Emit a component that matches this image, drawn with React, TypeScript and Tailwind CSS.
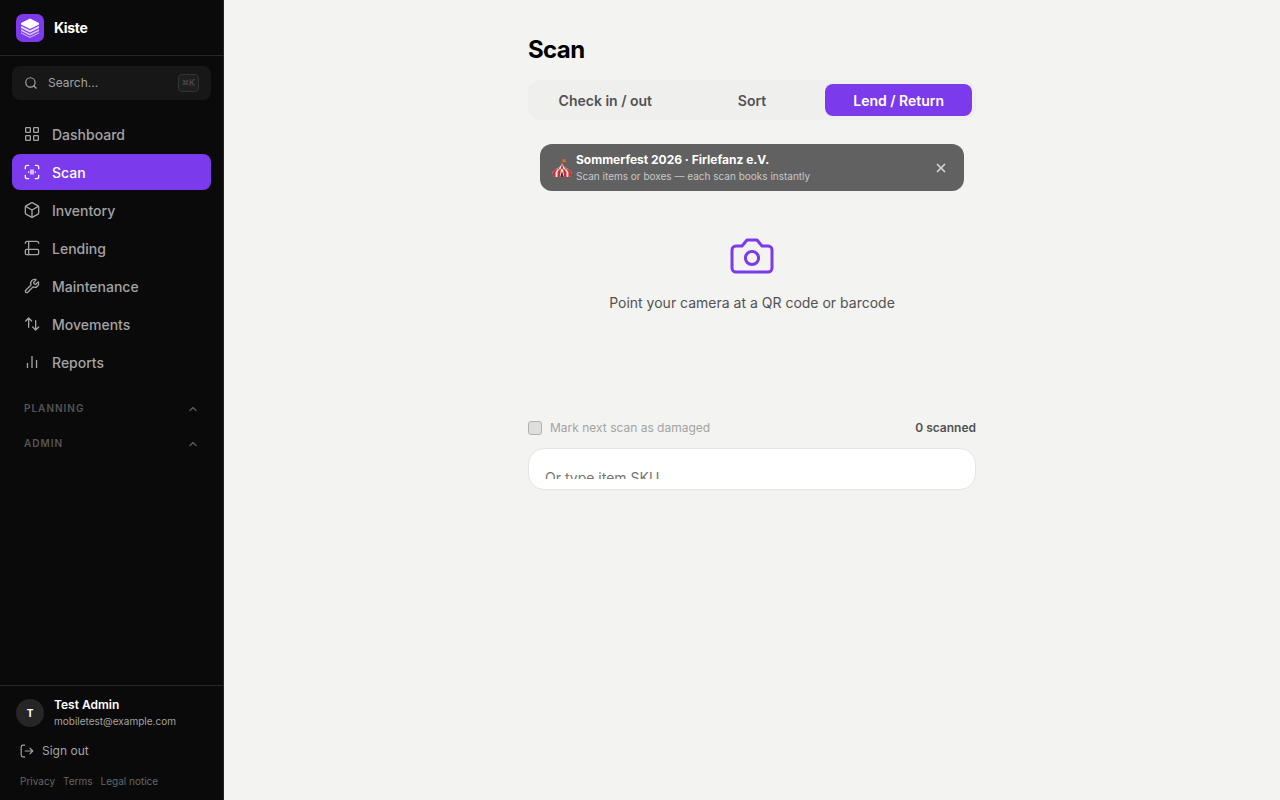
import React, { useState } from 'react';
import { ChevronUp, Search, Wrench, X } from 'lucide-react';

interface IconProps {
    className?: string;
    strokeWidth?: number;
}

const Svg: React.FC<IconProps & { children: React.ReactNode }> = ({ className, strokeWidth = 2, children }) => (
    <svg
        viewBox="0 0 24 24"
        fill="none"
        stroke="currentColor"
        strokeWidth={strokeWidth}
        strokeLinecap="round"
        strokeLinejoin="round"
        className={className}
        aria-hidden="true"
    >
        {children}
    </svg>
);

const DashboardIcon: React.FC<IconProps> = (props) => (
    <Svg {...props}>
        <rect x="2.5" y="2.5" width="7" height="7" rx="1" />
        <rect x="14.5" y="2.5" width="7" height="7" rx="1" />
        <rect x="2.5" y="14.5" width="7" height="7" rx="1" />
        <rect x="14.5" y="14.5" width="7" height="7" rx="1" />
    </Svg>
);

const ScanIcon: React.FC<IconProps> = (props) => (
    <Svg {...props}>
        <path d="M2 7V5a3 3 0 0 1 3-3h2M17 2h2a3 3 0 0 1 3 3v2M22 17v2a3 3 0 0 1-3 3h-2M7 22H5a3 3 0 0 1-3-3v-2" />
        <path d="M7 12v.5M10.500 9v6M13.500 9v6M17 12v.5" />
    </Svg>
);

const InventoryIcon: React.FC<IconProps> = (props) => (
    <Svg {...props}>
        <path d="M22 16.500v-9a2 2 0 0 0-1-1.700l-8-4.500a2 2 0 0 0-2 0L3 5.800a2 2 0 0 0-1 1.700v9a2 2 0 0 0 1 1.700l8 4.500a2 2 0 0 0 2 0l8-4.500a2 2 0 0 0 1-1.700z" />
        <path d="M2.500 6.500L12 12l9.500-5.500M12 23V12" />
    </Svg>
);

const LendingIcon: React.FC<IconProps> = (props) => (
    <Svg {...props}>
        <path d="M2 5a3 3 0 0 1 3-3h14a3 3 0 0 1 3 3M7 2v20" />
        <path d="M7 14h13a2 2 0 0 1 2 2v4a2 2 0 0 1-2 2H4a2 2 0 0 1-2-2v-4a2 2 0 0 1 2-2h3" />
    </Svg>
);

const MovementsIcon: React.FC<IconProps> = (props) => (
    <Svg {...props}>
        <path d="M7 17V3M2.500 7.500L7 3l4.500 4.500M17.500 7v14M13 16.500l4.500 4.500 4.500-4.500" />
    </Svg>
);

const ReportsIcon: React.FC<IconProps> = (props) => (
    <Svg {...props}>
        <g strokeLinecap="butt">
            <path d="M5.200 21v-7.500M12 21V3M18.800 21V9" />
        </g>
    </Svg>
);

const SignOutIcon: React.FC<IconProps> = (props) => (
    <Svg {...props}>
        <path d="M8 2H5a3 3 0 0 0-3 3v14a3 3 0 0 0 3 3h3M9 12h13M17 7l5 5-5 5" />
    </Svg>
);

const CameraIcon: React.FC<IconProps> = (props) => (
    <Svg {...props}>
        <path d="M14.500 4h-5L7 7H4a2 2 0 0 0-2 2v9a2 2 0 0 0 2 2h16a2 2 0 0 0 2-2V9a2 2 0 0 0-2-2h-3l-2.500-3z" />
        <circle cx="12" cy="13" r="3.300" />
    </Svg>
);

const Logo = () => (
    <svg viewBox="0 0 28 28" className="size-7" aria-hidden="true">
        <rect width="28" height="28" rx="7" fill="#7c3aed" />
        <path d="M14 4.500l9 4.500v1.500L14 15l-9-4.500V9z" fill="#fff" />
        <path d="M5 11.700l9 4.500 9-4.500v2.300l-9 4.500L5 14z" fill="#e4d6fc" />
        <path d="M5 15.200l9 4.500 9-4.500v1.800l-9 4.500L5 17z" fill="#d9c6fb" />
        <path d="M5 18.200l9 4.500 9-4.500v1.300L14 24l-9-4.500z" fill="#c9aff9" />
    </svg>
);

const TentIcon = () => (
    <svg viewBox="0 0 20 20" className="size-5 shrink-0" aria-hidden="true">
        <path d="M10.200 1v5" stroke="#8a5a35" strokeWidth="0.8" />
        <path d="M10.500 1l4 .6-1 1.200 1 1.200-4 .5z" fill="#c9702b" />
        <path d="M10 5c.8 3 3 5 6 6H4c3-1 5.200-3 6-6z" fill="#f4ebe9" />
        <path d="M10 5l1.300 6H8.700zM8.500 8L6.500 11H4c2-.7 3.500-1.700 4.500-3zM11.500 8l2 3H16c-2-.7-3.500-1.700-4.500-3z" fill="#c92f3c" />
        <path d="M4 11h12l3.500 3-.8 5H1.300l-.8-5z" fill="#f4ebe9" />
        <path d="M4 11h2l-2.400 3v5H1.300l-.8-5zM7.500 11H9l-1.200 8H5.500V14zM11 11h1.500l2 3v5h-2.300zM14 11h2l3.500 3-.8 5h-2.300v-5z" fill="#c92f3c" />
        <path d="M8.200 19l1.800-6 1.800 6z" fill="#5b2a2c" />
        <path d="M4 11.200h12" stroke="#dd9a5a" strokeWidth="0.7" />
    </svg>
);

const navItems = [
    { label: 'Dashboard', icon: DashboardIcon },
    { label: 'Scan', icon: ScanIcon },
    { label: 'Inventory', icon: InventoryIcon },
    { label: 'Lending', icon: LendingIcon },
    { label: 'Maintenance', icon: Wrench },
    { label: 'Movements', icon: MovementsIcon },
    { label: 'Reports', icon: ReportsIcon },
];

const tabs = ['Check in / out', 'Sort', 'Lend / Return'];

const Sidebar = () => (
    <aside className="flex w-56 shrink-0 flex-col border-r border-[#262626] bg-[#0a0a0a] text-[#a3a3a3]">
        <div className="flex h-14 items-center gap-2.5 border-b border-[#262626] px-4">
            <Logo />
            <span className="text-sm font-bold tracking-tight text-white">Kiste</span>
        </div>

        <div className="px-3 pt-2.5">
            <button className="flex h-[34px] w-full items-center gap-2.5 rounded-lg bg-[#171717] px-3 text-left">
                <Search className="size-3.5" strokeWidth={2} />
                <span className="flex-1 text-xs">Search...</span>
                <kbd className="flex h-[18px] w-[21px] items-center justify-center rounded border border-[#333] bg-[#1f1f1f] font-[Inter,sans-serif] text-[9px] text-[#555]">
                    <span className="text-[7px]">⌘</span>K
                </kbd>
            </button>
        </div>

        <nav className="flex flex-1 flex-col px-3 pt-4">
            <div className="flex flex-col gap-0.5">
                {navItems.map(({ label, icon: Icon }) => (
                    <a
                        key={label}
                        href="#"
                        className={`flex h-9 items-center gap-3 rounded-lg px-3 text-sm font-medium ${label === 'Scan' ? 'bg-[#7c3aed] text-white' : ''}`}
                    >
                        <Icon className="size-4" strokeWidth={2} />
                        <span className="pt-0.5">{label}</span>
                    </a>
                ))}
            </div>
            <div className="flex flex-col pt-[11px]">
                {['Planning', 'Admin'].map((section) => (
                    <button
                        key={section}
                        className="flex h-[35px] items-center justify-between px-3 text-[10px] font-semibold tracking-widest text-[#555] uppercase"
                    >
                        {section}
                        <ChevronUp className="size-3" strokeWidth={3} />
                    </button>
                ))}
            </div>
        </nav>

        <div className="border-t border-[#262626] px-4 py-[11px]">
            <div className="flex items-center gap-2.5">
                <div className="flex size-7 items-center justify-center rounded-full bg-[#262626] text-[10px] font-bold text-white">T</div>
                <div>
                    <p className="text-xs leading-4 font-semibold text-white">Test Admin</p>
                    <p className="text-[10px] leading-4">mobiletest@example.com</p>
                </div>
            </div>
            <button className="mt-2 flex h-7 items-center gap-2 px-1 text-xs">
                <SignOutIcon className="size-3.5" strokeWidth={2} />
                Sign out
            </button>
            <div className="mt-2 flex gap-2 px-1 text-[10px] leading-4 text-[#666]">
                <a href="#">Privacy</a>
                <a href="#">Terms</a>
                <a href="#">Legal notice</a>
            </div>
        </div>
    </aside>
);

const App = () => {
    const [activeTab, setActiveTab] = useState('Lend / Return');

    return (
        <div className="flex min-h-screen bg-[#f3f3f1] font-[Inter,sans-serif]">
            <Sidebar />
            <main className="flex-1 pt-8">
                <div className="mx-auto max-w-md">
                    <h1 className="text-2xl leading-9 font-bold tracking-tight text-black">Scan</h1>

                    {/* Mode switch */}
                    <div className="mt-3 grid grid-cols-3 rounded-xl bg-[#efefed] p-1">
                        {tabs.map((tab) => (
                            <button
                                key={tab}
                                onClick={() => setActiveTab(tab)}
                                className={`h-8 rounded-lg pt-0.5 text-sm font-semibold ${tab === activeTab ? 'bg-[#7c3aed] text-white' : 'text-[#525252]'}`}
                            >
                                {tab}
                            </button>
                        ))}
                    </div>

                    {/* Active lending */}
                    <div className="mx-3 mt-6 flex h-[47px] items-center gap-1 rounded-xl bg-[#616161] px-3">
                        <TentIcon />
                        <div className="flex-1">
                            <p className="text-xs leading-4 font-bold text-white">Sommerfest 2026 · Firlefanz e.V.</p>
                            <p className="text-[10px] leading-4 text-[#c8c8c8]">Scan items or boxes — each scan books instantly</p>
                        </div>
                        <button className="px-1 text-[#d4d4d4]" aria-label="Close">
                            <X className="size-3.5" strokeWidth={3} />
                        </button>
                    </div>

                    <div className="flex flex-col items-center pt-[41px]">
                        <CameraIcon className="size-12 text-[#7c3aed]" strokeWidth={1.5} />
                        <p className="mt-[11px] text-sm leading-6 text-[#525252]">Point your camera at a QR code or barcode</p>
                    </div>

                    <div className="mt-[103px] flex h-5 items-center justify-between text-xs">
                        <label className="flex items-center gap-2 text-[#a3a3a3]">
                            <input
                                type="checkbox"
                                disabled
                                className="size-3.5 appearance-none rounded-[3px] border border-[#b0b0b0] bg-[#dededc]"
                            />
                            Mark next scan as damaged
                        </label>
                        <span className="font-semibold text-[#525252]">0 scanned</span>
                    </div>

                    <div className="mt-2.5 h-[42px] rounded-2xl border border-[#e5e5e3] bg-white">
                        <div className="h-[30px] overflow-hidden rounded-t-2xl">
                            <input
                                type="text"
                                aria-label="Item SKU"
                                placeholder="Or type item SKU..."
                                className="h-14 w-full bg-transparent px-4 text-sm outline-none placeholder:text-[#757575]"
                            />
                        </div>
                    </div>
                </div>
            </main>
        </div>
    );
};

export default App;
